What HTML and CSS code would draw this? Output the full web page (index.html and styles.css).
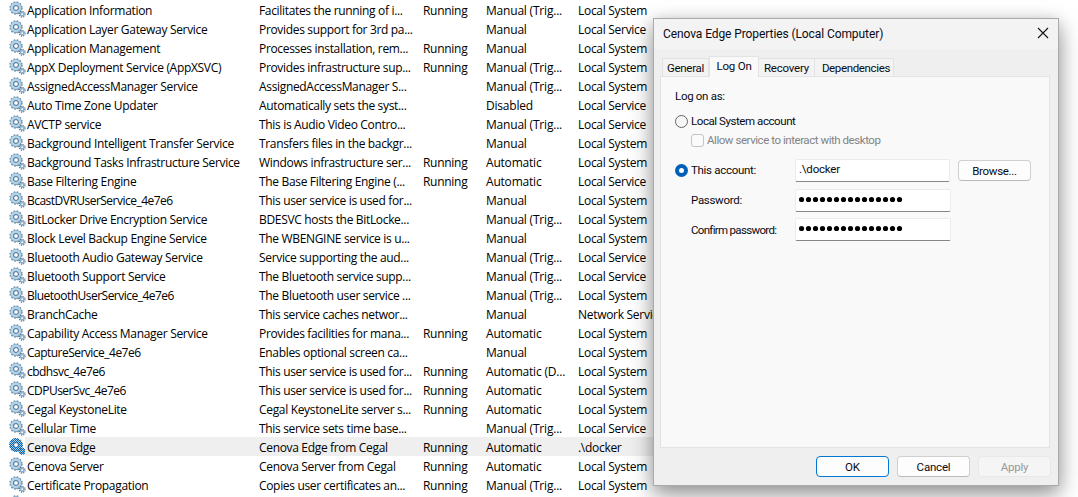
FILE: index.html
```
<!DOCTYPE html>
<html lang="en">
<head>
<meta charset="utf-8">
<title>Services</title>
<link rel="stylesheet" href="styles.css">
</head>
<body>
<svg class="defs" width="0" height="0">
  <defs>
    <pattern id="check" width="2" height="2" patternUnits="userSpaceOnUse">
      <path d="M0 0h1v1h-1zM1 1h1v1h-1z" fill="#0067b8"/>
    </pattern>
    <symbol id="gear" viewBox="0 0 17 17">
      <circle cx="7" cy="7" r="5.9" fill="none" stroke="#6b8da4" stroke-width="1.6" stroke-dasharray="1.55 1.54"/>
      <circle cx="7" cy="7" r="4.1" fill="none" stroke="#7b9fba" stroke-width="3.6"/>
      <circle cx="6.8" cy="6.7" r="4" fill="none" stroke="#b3d4eb" stroke-width="2.6"/>
      <circle cx="7" cy="7" r="2.4" fill="#fff" stroke="#486c8c" stroke-width="1"/>
      <circle cx="13.2" cy="13.2" r="2.8" fill="none" stroke="#587488" stroke-width="1.4" stroke-dasharray="1.1 1.1"/>
      <circle cx="13.2" cy="13.2" r="1.7" fill="#fff" stroke="#8cb0ca" stroke-width="1.6"/>
    </symbol>
  </defs>
</svg>
<main class="screen">
  <div class="list" id="list"></div>
  <section class="dialog">
    <header class="titlebar">
      <span class="title">Cenova Edge Properties (Local Computer)</span>
      <svg class="close" width="12" height="12" viewBox="0 0 12 12"><path d="M1 1l10 10M11 1L1 11" stroke="#1a1a1a" stroke-width="1.2"/></svg>
    </header>
    <nav class="tabs">
      <span class="tab general">General</span>
      <span class="tab active">Log On</span>
      <span class="tab recovery">Recovery</span>
      <span class="tab dependencies">Dependencies</span>
    </nav>
    <div class="panel">
      <div class="line heading"><span class="t-heading">Log on as:</span></div>
      <div class="line system"><i class="radio"></i><span class="t-system">Local System account</span></div>
      <div class="line allow"><i class="checkbox"></i><span class="t-allow">Allow service to interact with desktop</span></div>
      <div class="field account">
        <i class="radio on"></i><label class="t-account">This account:</label>
        <div class="input"><span class="t-docker">.\docker</span></div>
        <button class="btn"><span class="t-browse">Browse...</span></button>
      </div>
      <div class="field password">
        <label class="t-password">Password:</label>
        <div class="input secret"><svg width="105" height="7" class="dots"></svg></div>
      </div>
      <div class="field confirm">
        <label class="t-confirm">Confirm password:</label>
        <div class="input secret"><svg width="105" height="7" class="dots"></svg></div>
      </div>
    </div>
    <footer class="actions">
      <button class="btn primary"><span class="t-ok">OK</span></button>
      <button class="btn"><span class="t-cancel">Cancel</span></button>
      <button class="btn disabled"><span class="t-apply">Apply</span></button>
    </footer>
  </section>
</main>
<script src="app.js"></script>
</body>
</html>
```
FILE: styles.css
```
* { box-sizing: border-box; }
body { margin: 0; background: #fff; color: #000; }
.defs { position: absolute; }
.screen { position: relative; width: 1078px; height: 497px; overflow: hidden; }

.list { font: 12px/21px "Open Sans", "Noto Sans", sans-serif; letter-spacing: -0.33px; }
.row { display: grid; grid-template-columns: 25px 232px 164px 63px 92px 502px; height: 19px; white-space: nowrap; }
.row svg { display: block; width: 17px; height: 17px; margin: 1px 0 0 8.5px; }
.cell { padding-left: 2px; height: 19px; }
.name { letter-spacing: -0.31px; }
.name.instance { letter-spacing: -0.52px; }
.status, .logon { letter-spacing: -0.29px; }
.startup { letter-spacing: -0.2px; }
.row.selected .cell { background: #efefef; }
.row.selected .logon { width: 90px; }

.dialog {
  position: absolute; left: 653px; top: 18px; width: 406px; height: 468px;
  display: flex; flex-direction: column;
  background: #efefef; border: 1px solid #aaa;
  box-shadow: 0 9px 22px rgba(0, 0, 0, .38), 0 2px 14px rgba(0, 0, 0, .12);
  font: 11.5px/16px Roboto, sans-serif; color: #0a0a14;
}
.dialog span, .dialog label { white-space: nowrap; }
.titlebar { height: 30px; flex: none; display: flex; align-items: center; justify-content: space-between; padding: 0 9px; background: #f3f3f3; }
.title { font-size: 12px; letter-spacing: -0.09px; }
.titlebar .close { margin-top: -2px; }
.tabs { height: 27px; flex: none; display: flex; align-items: flex-end; padding-left: 8px; }
.tab { height: 18px; border: 1px solid #e3e3e3; border-bottom: 0; border-left: 0; background: #f3f3f3; text-align: center; line-height: 19px; letter-spacing: -0.2px; }
.general { width: 47px; border-left: 1px solid #e3e3e3; letter-spacing: -0.3px; }
.active { width: 50px; height: 21px; margin-bottom: -1px; background: #f9f9f9; z-index: 1; line-height: 19px; border-left: 1px solid #e3e3e3; }
.recovery { width: 56px; }
.dependencies { width: 79px; padding-left: 4px; letter-spacing: -0.35px; }

.panel { height: 372px; flex: none; margin: 0 8px 0 6px; padding: 11px 0 0 14px; background: #f9f9f9; border: 1px solid #e3e3e3; }
.line { display: flex; align-items: center; height: 16px; }
.t-heading { letter-spacing: -0.3px; }
.system { margin-top: 9px; gap: 3px; letter-spacing: -0.43px; }
.allow { margin: 3px 0 0 16px; gap: 3px; color: #838383; letter-spacing: -0.45px; }
.radio { width: 13px; height: 13px; flex: none; border: 1px solid #666; border-radius: 50%; background: #f6f6f6; }
.radio.on { border: 4px solid #0060b8; background: #fff; margin-right: 3px; }
.checkbox { width: 13px; height: 13px; flex: none; border: 1px solid #c4c4c4; border-radius: 3px; background: #fbfbfb; }
.field { display: flex; align-items: center; height: 24px; }
.account { margin-top: 10px; }
.field label { width: 104px; }
.t-account { letter-spacing: -0.3px; }
.t-password { letter-spacing: -0.3px; }
.t-confirm { letter-spacing: -0.68px; padding-top: 1px; }
.t-docker { letter-spacing: -0.2px; }
.t-browse { letter-spacing: -0.3px; }
.t-cancel, .t-apply { letter-spacing: -0.2px; }
.password, .confirm { padding-left: 16px; }
.password { margin-top: 6px; }
.confirm { margin-top: 5px; }
.input { width: 155px; height: 23px; padding: 0 3px; background: #fff; border: 1px solid #ebebeb; border-bottom-color: #868686; border-radius: 2px; line-height: 19px; }
.secret { width: 156px; display: flex; align-items: center; }
.secret .dots { margin-top: -1px; }
.btn { width: 73px; height: 21px; padding: 1px 0 0; border: 1px solid #d0d0d0; border-bottom-color: #bbb; border-radius: 4px; background: #fdfdfd; font: inherit; color: inherit; }
.field .btn { margin-left: 8px; }
.actions { flex: none; display: flex; justify-content: flex-end; gap: 8px; padding: 8px 7px 0 0; }
.actions .btn { padding: 0; }
.btn.primary { border-color: #0078d4; }
.btn.disabled { border-color: #e8e8e8; background: #f5f5f5; color: #999; }
```
FILE: app.js
```
const services = [
  ["Application Information", "Facilitates the running of i...", "Running", "Manual (Trig...", "Local System"],
  ["Application Layer Gateway Service", "Provides support for 3rd pa...", "", "Manual", "Local Service"],
  ["Application Management", "Processes installation, rem...", "Running", "Manual", "Local System"],
  ["AppX Deployment Service (AppXSVC)", "Provides infrastructure sup...", "Running", "Manual (Trig...", "Local System"],
  ["AssignedAccessManager Service", "AssignedAccessManager S...", "", "Manual (Trig...", "Local System"],
  ["Auto Time Zone Updater", "Automatically sets the syst...", "", "Disabled", "Local Service"],
  ["AVCTP service", "This is Audio Video Contro...", "", "Manual (Trig...", "Local Service"],
  ["Background Intelligent Transfer Service", "Transfers files in the backgr...", "", "Manual", "Local System"],
  ["Background Tasks Infrastructure Service", "Windows infrastructure ser...", "Running", "Automatic", "Local System"],
  ["Base Filtering Engine", "The Base Filtering Engine (...", "Running", "Automatic", "Local Service"],
  ["BcastDVRUserService_4e7e6", "This user service is used for...", "", "Manual", "Local System"],
  ["BitLocker Drive Encryption Service", "BDESVC hosts the BitLocke...", "", "Manual (Trig...", "Local System"],
  ["Block Level Backup Engine Service", "The WBENGINE service is u...", "", "Manual", "Local System"],
  ["Bluetooth Audio Gateway Service", "Service supporting the aud...", "", "Manual (Trig...", "Local Service"],
  ["Bluetooth Support Service", "The Bluetooth service supp...", "", "Manual (Trig...", "Local Service"],
  ["BluetoothUserService_4e7e6", "The Bluetooth user service ...", "", "Manual (Trig...", "Local System"],
  ["BranchCache", "This service caches networ...", "", "Manual", "Network Service"],
  ["Capability Access Manager Service", "Provides facilities for mana...", "Running", "Automatic", "Local System"],
  ["CaptureService_4e7e6", "Enables optional screen ca...", "", "Manual", "Local System"],
  ["cbdhsvc_4e7e6", "This user service is used for...", "Running", "Automatic (D...", "Local System"],
  ["CDPUserSvc_4e7e6", "This user service is used for...", "Running", "Automatic", "Local System"],
  ["Cegal KeystoneLite", "Cegal KeystoneLite server s...", "Running", "Automatic", "Local System"],
  ["Cellular Time", "This service sets time base...", "", "Manual (Trig...", "Local Service"],
  ["Cenova Edge", "Cenova Edge from Cegal", "Running", "Automatic", ".\\docker"],
  ["Cenova Server", "Cenova Server from Cegal", "Running", "Automatic", "Local System"],
  ["Certificate Propagation", "Copies user certificates an...", "Running", "Manual (Trig...", "Local System"],
  ["", "", "", "", ""]
];
const columns = ["name", "desc", "status", "startup", "logon"];
const highlight = '<circle cx="7" cy="7" r="4.6" fill="none" stroke="url(#check)" stroke-width="4.6"/><circle cx="13.2" cy="13.2" r="3.4" fill="url(#check)"/>';
document.getElementById("list").innerHTML = services.map(s => {
  const selected = s[0] === "Cenova Edge";
  return `<div class="row${selected ? " selected" : ""}"><svg viewBox="0 0 17 17"><use href="#gear"/>${selected ? highlight : ""}</svg>` +
    columns.map((c, i) => `<span class="cell ${c}${i === 0 && s[0].includes("_") ? " instance" : ""}">${s[i]}</span>`).join("") + "</div>";
}).join("");
document.querySelectorAll(".dots").forEach(svg => {
  svg.innerHTML = Array.from({ length: 15 }, (_, i) => `<circle cx="${2.5 + i * 7}" cy="3.5" r="2.6"/>`).join("");
});
```
